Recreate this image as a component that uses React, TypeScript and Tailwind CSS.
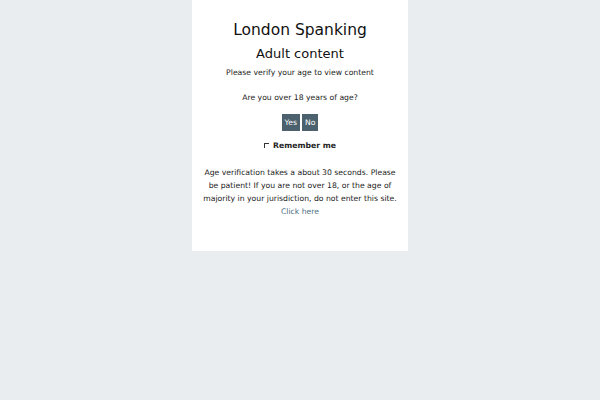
export default function App() {
  return (
    <div className="min-h-[400px] w-full bg-[#e9edf0] font-['DejaVu_Sans',sans-serif]">
      <div className="mx-auto w-[216px] bg-white pt-[20px] pb-[33px] text-center text-[#222]">
        <h1 className="text-[15.5px] leading-[20px] text-[#111]">London Spanking</h1>
        <h2 className="mt-[5px] text-[13px] leading-[18px] text-[#111]">Adult content</h2>
        <p className="mt-[2.5px] text-[7.7px] leading-[13px]">Please verify your age to view content</p>
        <p className="mt-[12px] text-[7.7px] leading-[13px]">Are you over 18 years of age?</p>
        <div className="mt-[10.5px] flex justify-center gap-[2px]">
          <button className="h-[17px] bg-[#4b616d] px-[3px] text-[7.7px] text-white">Yes</button>
          <button className="h-[17px] bg-[#4b616d] px-[3px] text-[7.7px] text-white">No</button>
        </div>
        <label className="mt-[7.5px] flex items-center justify-center gap-[4px] text-[7.7px] leading-[13px] font-bold">
          <span className="h-[5px] w-[5px] border-t border-l border-[#333]" />
          Remember me
        </label>
        <p className="mt-[14px] px-[9px] text-[7.7px] leading-[13px]">
          Age verification takes a about 30 seconds. Please be patient! If you are not over 18, or the age of
          majority in your jurisdiction, do not enter this site.{' '}
          <a className="text-[#4f6f7f]" href="#">
            Click here
          </a>
        </p>
      </div>
    </div>
  )
}
